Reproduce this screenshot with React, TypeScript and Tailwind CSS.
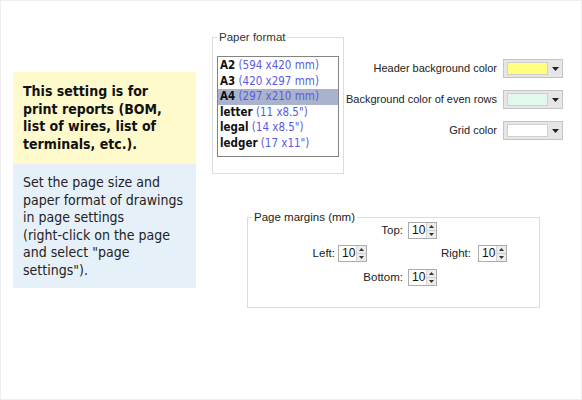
import React from 'react'

const ui = { fontFamily: '"Liberation Sans", Arial, sans-serif' }
const tahoma = { fontFamily: '"DejaVu Sans Condensed", "DejaVu Sans", sans-serif' }

const formats = [
    { name: 'A2', size: '(594 x420 mm)' },
    { name: 'A3', size: '(420 x297 mm)' },
    { name: 'A4', size: '(297 x210 mm)', selected: true },
    { name: 'letter', size: '(11 x8.5")' },
    { name: 'legal', size: '(14 x8.5")' },
    { name: 'ledger', size: '(17 x11")' },
]

const colorRows = [
    { label: 'Header background color', swatch: 'bg-[#ffff80]' },
    { label: 'Background color of even rows', swatch: 'bg-[#e3f8ec]' },
    { label: 'Grid color', swatch: 'bg-white' },
]

function ColorPicker({ swatch }: { swatch: string }) {
    return (
        <div className="flex h-[19px] w-[60px] shrink-0 items-center border border-[#c4c4c4] bg-[#e6e6e6] pl-[3px]">
            <div className={`h-[13px] w-[41px] border border-[#d0d0d0] ${swatch}`} />
            <div className="flex flex-1 justify-center">
                <svg width="7" height="4" viewBox="0 0 7 4">
                    <path d="M0 0h7L3.5 4z" fill="#222" />
                </svg>
            </div>
        </div>
    )
}

function Spinner({ value }: { value: number }) {
    return (
        <div className="flex h-[17px] w-[29px] border border-[#acacac] bg-white">
            <div className="flex-1 pl-[3px] text-[12px] leading-[15px] text-[#111]" style={ui}>
                {value}
            </div>
            <div className="flex w-[10px] flex-col border-l border-[#d6d6d6] bg-[#ececec]">
                <div className="flex flex-1 items-center justify-center border-b border-[#d0d0d0]">
                    <svg width="5" height="3" viewBox="0 0 5 3">
                        <path d="M0 3h5L2.5 0z" fill="#333" />
                    </svg>
                </div>
                <div className="flex flex-1 items-center justify-center">
                    <svg width="5" height="3" viewBox="0 0 5 3">
                        <path d="M0 0h5L2.5 3z" fill="#333" />
                    </svg>
                </div>
            </div>
        </div>
    )
}

function MarginField({ label, labelWidth, gap }: { label: string; labelWidth: string; gap: string }) {
    return (
        <div className={`flex items-center ${gap}`}>
            <span className={`${labelWidth} text-right text-[11.5px] text-[#222]`} style={ui}>
                {label}
            </span>
            <Spinner value={10} />
        </div>
    )
}

export default function App() {
    return (
        <div className="flex h-[400px] w-[582px] border border-[#eeeeee] bg-white">
            {/* info box */}
            <div className="ml-[12px] mt-[71px] w-[183px] shrink-0 self-start whitespace-nowrap" style={tahoma}>
                <div className="bg-[#fffacc] px-[10px] pb-[11px] pt-[11px] text-[14px] font-bold leading-[17.5px] text-[#111]">
                    This setting is for<br />
                    print reports (BOM,<br />
                    list of wires, list of<br />
                    terminals, etc.).
                </div>
                <div className="bg-[#e6f0f9] px-[10px] pb-[9px] pt-[10px] text-[14px] leading-[17.5px] text-[#222]">
                    Set the page size and<br />
                    paper format of drawings<br />
                    in page settings<br />
                    (right-click on the page<br />
                    and select "page<br />
                    settings").
                </div>
            </div>

            <div className="flex min-w-0 flex-1 flex-col">
                <div className="flex">
                    {/* paper format */}
                    <fieldset className="ml-[16px] mt-[29px] h-[144px] w-[132px] shrink-0 border border-[#dcdcdc] px-[4px]">
                        <legend className="px-[2px] text-[11.5px] leading-[14px] text-[#333]" style={ui}>
                            Paper format
                        </legend>
                        <div className="mt-[12px] h-[101px] w-[122px] border border-[#848484] bg-white pt-[1px]" style={tahoma}>
                            {formats.map((f) => (
                                <div
                                    key={f.name}
                                    className={`px-[2px] text-[11.5px] leading-[15.5px] ${f.selected ? 'bg-[#a9b3cd]' : ''}`}
                                >
                                    <span className="font-bold text-[#111]">{f.name}</span>{' '}
                                    <span className="text-[#5a5ae0]">{f.size}</span>
                                </div>
                            ))}
                        </div>
                    </fieldset>

                    {/* colours */}
                    <div className="ml-auto mr-[18px] mt-[58px] flex flex-col items-end gap-[12px]">
                        {colorRows.map((r) => (
                            <div key={r.label} className="flex items-center gap-[6px]">
                                <span className="whitespace-nowrap text-[11px] text-[#222]" style={ui}>
                                    {r.label}
                                </span>
                                <ColorPicker swatch={r.swatch} />
                            </div>
                        ))}
                    </div>
                </div>

                {/* page margins */}
                <fieldset className="ml-[51px] mt-[36px] h-[98px] w-[293px] shrink-0 border border-[#dcdcdc]">
                    <legend className="ml-[4px] px-[2px] text-[11.5px] leading-[14px] text-[#222]" style={ui}>
                        Page margins (mm)
                    </legend>
                    <div className="-mt-[2px] flex flex-col gap-[6px]">
                        <div className="ml-[105px]">
                            <MarginField label="Top:" labelWidth="w-[50px]" gap="gap-[5px]" />
                        </div>
                        <div className="flex">
                            <div className="ml-[52px]">
                                <MarginField label="Left:" labelWidth="w-[35px]" gap="gap-[3px]" />
                            </div>
                            <div className="ml-[69px]">
                                <MarginField label="Right:" labelWidth="w-[35px]" gap="gap-[7px]" />
                            </div>
                        </div>
                        <div className="ml-[105px]">
                            <MarginField label="Bottom:" labelWidth="w-[50px]" gap="gap-[5px]" />
                        </div>
                    </div>
                </fieldset>
            </div>
        </div>
    )
}
